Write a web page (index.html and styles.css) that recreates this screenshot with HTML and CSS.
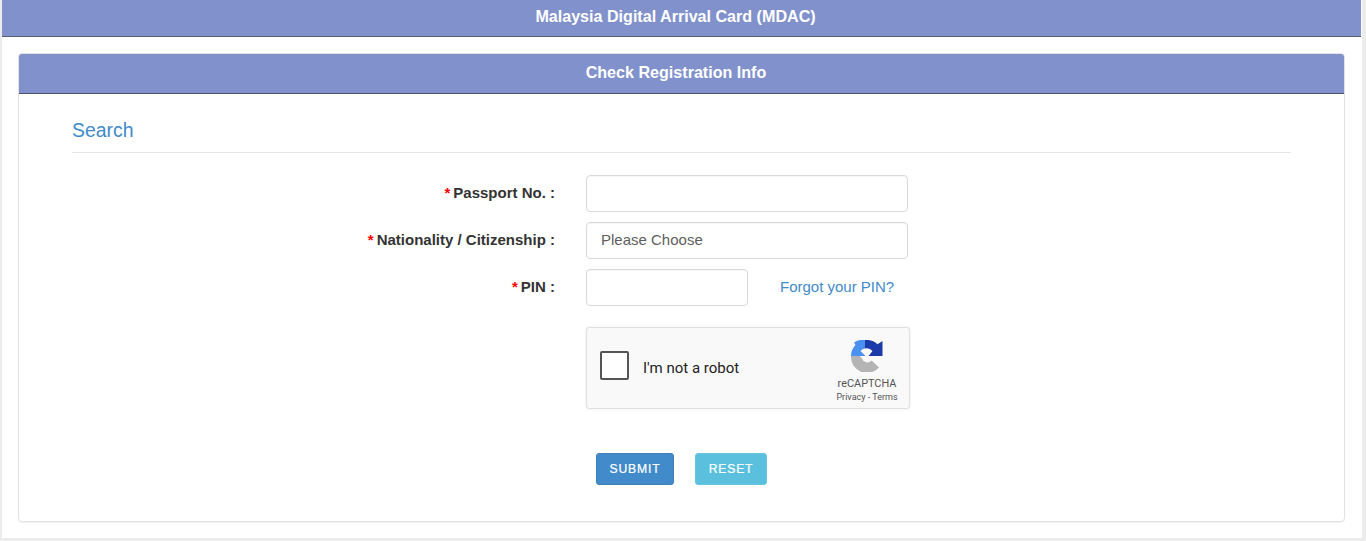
FILE: index.html
```html
<!DOCTYPE html>
<html lang="en">
<head>
<meta charset="utf-8">
<title>Malaysia Digital Arrival Card (MDAC)</title>
<link rel="stylesheet" href="styles.css">
</head>
<body>
<div class="page">
  <header class="topbar">Malaysia Digital Arrival Card (MDAC)</header>
  <main class="content">
    <section class="panel">
      <h1 class="panel-heading">Check Registration Info</h1>
      <div class="panel-body">
        <h2 class="section-title">Search</h2>
        <form class="form">
          <div class="row">
            <label class="label"><span class="req">*</span>Passport No. :</label>
            <div class="control"><div class="input"></div></div>
          </div>
          <div class="row">
            <label class="label"><span class="req">*</span>Nationality / Citizenship :</label>
            <div class="control"><div class="input select">Please Choose</div></div>
          </div>
          <div class="row">
            <label class="label"><span class="req">*</span>PIN :</label>
            <div class="control pin-control">
              <div class="input pin"></div>
              <a class="forgot" href="#">Forgot your PIN?</a>
            </div>
          </div>
          <div class="captcha">
            <div class="check"></div>
            <span class="robot">I'm not a robot</span>
            <div class="brand">
              <svg class="logo" viewBox="0 0 32 32" width="32" height="32" aria-hidden="true">
                <path fill="#b4b4b4" d="M0 16H9L11 18.500A5.500 5.500 0 0 0 20.500 20.500L28 27.500A16 16 0 0 1 0 16Z"/>
                <path fill="#4a90f0" d="M14 0V8.500A7.500 7.500 0 0 0 9.500 11L14.500 16H0A16 16 0 0 1 4.500 5L3 2.500A16 16 0 0 1 14 0Z"/>
                <path fill="#1c3aa9" d="M14 0A16 16 0 0 1 26.500 4.300L31.500 1V16H17.500L21.500 11A7.500 7.500 0 0 0 14 8.500Z"/>
              </svg>
              <span class="brand-name">reCAPTCHA</span>
              <span class="brand-links">Privacy - Terms</span>
            </div>
          </div>
          <div class="actions">
            <button class="btn btn-submit" type="button">SUBMIT</button>
            <button class="btn btn-reset" type="button">RESET</button>
          </div>
        </form>
      </div>
    </section>
  </main>
</div>
</body>
</html>
```
FILE: styles.css
```css
* { box-sizing: border-box; }
html, body { height: 100%; }
body {
  margin: 0;
  background: #ececec;
  font-family: "Liberation Sans", Arial, sans-serif;
  color: #333;
  overflow: hidden;
}
.page {
  width: 1360px;
  height: 538px;
  margin-left: 2px;
  background: #fff;
}
.topbar {
  height: 37px;
  width: 1359px;
  background: #8091cb;
  border-bottom: 1px solid #5a5f70;
  color: #fff;
  font-size: 16.1px;
  font-weight: 700;
  line-height: 32px;
  text-align: center;
  padding-right: 12px;
}
.content { padding: 16px 17px 0 16px; }
.panel {
  height: 469px;
  border: 1px solid #e2e2e2;
  border-radius: 4px;
  box-shadow: 0 1px 1px rgba(0,0,0,.05);
}
.panel-heading {
  margin: 0;
  height: 40px;
  background: #8091cb;
  border-bottom: 1px solid #4c5570;
  border-radius: 3px 3px 0 0;
  color: #fff;
  font-size: 16.1px;
  font-weight: 700;
  line-height: 37px;
  text-align: center;
  padding-right: 11px;
}
.panel-body { padding: 0 53px; }
.section-title {
  margin: 0;
  height: 59px;
  padding-top: 23px;
  border-bottom: 1px solid #e5e5e5;
  color: #428bca;
  font-size: 19.400px;
  font-weight: 400;
  line-height: 26px;
}
.form { padding-top: 22px; }
.row {
  display: flex;
  align-items: center;
  height: 37px;
  margin-bottom: 10px;
}
.label {
  width: 483px;
  font-size: 15px;
  font-weight: 700;
  text-align: right;
  color: #333;
  padding-bottom: 2px;
}
.req {
  color: #f00;
  margin-right: 3px;
  font-weight: 700;
}
.control {
  margin-left: 31px;
  width: 322px;
}
.pin-control {
  display: flex;
  align-items: center;
}
.input {
  height: 37px;
  border: 1px solid #d9d9d9;
  border-radius: 4px;
  background: #fff;
  box-shadow: inset 0 1px 1px rgba(0,0,0,.04);
  font-size: 15px;
  line-height: 33px;
  color: #5e5e5e;
}
.select { padding-left: 14px; }
.pin { width: 162px; flex: none; }
.forgot {
  margin-left: 32px;
  padding-bottom: 2px;
  color: #428bca;
  font-size: 15px;
  text-decoration: none;
  white-space: nowrap;
}
.captcha {
  display: flex;
  align-items: center;
  position: relative;
  width: 324px;
  height: 82px;
  margin: 21px 0 0 514px;
  padding-left: 13px;
  background: #f9f9f9;
  border: 1px solid #dfdfdf;
  border-radius: 3px;
  box-shadow: 0 0 3px rgba(0,0,0,.08);
}
.check {
  width: 29px;
  height: 29px;
  background: #fff;
  border: 2px solid #555;
  border-radius: 2px;
  margin-top: -5px;
}
.robot {
  margin-left: 14px;
  font-family: Roboto, "Liberation Sans", sans-serif;
  font-size: 15px;
  color: #222;
}
.brand {
  margin-left: auto;
  margin-right: 6px;
  width: 72px;
  height: 100%;
  display: flex;
  flex-direction: column;
  align-items: center;
  padding-top: 12px;
  color: #555;
  font-family: Roboto, "Liberation Sans", sans-serif;
}
.logo { flex: none; }
.brand-name { font-size: 10.900px; line-height: 12px; margin-top: 6px; }
.brand-links { font-size: 9px; line-height: 10px; margin-top: 2px; }
.actions {
  display: flex;
  gap: 21px;
  margin: 44px 0 0 524px;
}
.btn {
  height: 32px;
  border-radius: 3px;
  color: #fff;
  font-family: inherit;
  font-size: 12.200px;
  font-weight: 500;
  -webkit-text-stroke: .2px #fff;
  letter-spacing: .8px;
  padding: 0;
}
.btn-submit {
  width: 78px;
  background: #428bca;
  border: 1px solid #3c7fb9;
}
.btn-reset {
  width: 72px;
  background: #5bc0de;
  border: 1px solid #66c6e2;
}
```
